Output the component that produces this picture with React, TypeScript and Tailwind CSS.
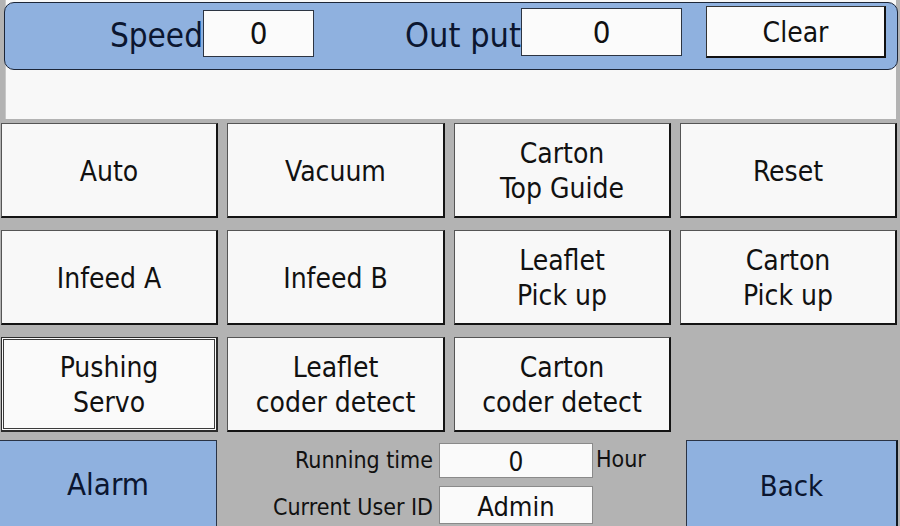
import React from "react";

const face = { fontFamily: '"DejaVu Sans", Verdana, sans-serif' };

function Key({ label, pressed = false }: { label: string[]; pressed?: boolean }) {
  const lines = label.map((l, i) => <span key={i} className="block">{l}</span>);
  if (pressed) {
    return (
      <div className="border border-[#2b2b2b] border-r-2 border-b-2 bg-[#fafafa] p-[1px]">
        <div className="h-full pt-[1px] border border-[#3a3a3a] flex flex-col items-center justify-center text-[28px] leading-[35px] text-[#111] font-stretch-condensed">
          {lines}
        </div>
      </div>
    );
  }
  return (
    <div className="pt-[2px] border-t border-l border-[#555] border-r-2 border-b-2 border-r-[#141414] border-b-[#141414] bg-[#f8f8f8] flex flex-col items-center justify-center text-[28px] leading-[35px] text-[#111] font-stretch-condensed">
      {lines}
    </div>
  );
}

export default function App() {
  return (
    <div className="w-[900px] h-[526px] bg-[#b3b3b3] overflow-hidden flex flex-col" style={face}>
      {/* status header over the message strip */}
      <div className="ml-[5px] mr-[4px] h-[119px] bg-[#f8f8f8] border-l border-[#c8c8c8]">
        <div className="-ml-[2px] -mr-[2px] mt-[2px] h-[68px] rounded-[10px] border-[1.5px] border-[#1c2638] bg-[#8fb1df] flex items-start text-[#0b1630] font-stretch-condensed">
          <div className="w-[198px] text-right text-[33px] leading-none mt-[16px]">Speed</div>
          <div className="w-[111px] h-[47px] mt-[7px] bg-[#fbfbfb] border border-[#2c3442] flex items-center justify-center text-[31px] text-[#111]">0</div>
          <div className="w-[207px] text-right text-[34px] leading-none mt-[15px]">Out put</div>
          <div className="w-[161px] h-[48px] mt-[5px] bg-[#fbfbfb] border border-[#2c3442] flex items-center justify-center text-[31px] text-[#111]">0</div>
          <div className="ml-[24px] w-[180px] h-[52px] mt-[3px] pt-[3px] bg-[#fbfbfb] border-t border-l border-[#333] border-r-2 border-b-2 border-r-[#111] border-b-[#111] flex items-center justify-center text-[28px] text-[#111]">Clear</div>
        </div>
      </div>

      {/* function keys */}
      <div className="mt-[4px] ml-[1px] grid grid-cols-[217px_218px_217px_217px] grid-rows-[95px_95px_95px] gap-x-[9px] gap-y-[12px]">
        <Key label={["Auto"]} />
        <Key label={["Vacuum"]} />
        <Key label={["Carton", "Top Guide"]} />
        <Key label={["Reset"]} />
        <Key label={["Infeed A"]} />
        <Key label={["Infeed B"]} />
        <Key label={["Leaflet", "Pick up"]} />
        <Key label={["Carton", "Pick up"]} />
        <Key label={["Pushing", "Servo"]} pressed />
        <Key label={["Leaflet", "coder detect"]} />
        <Key label={["Carton", "coder detect"]} />
      </div>

      {/* bottom bar */}
      <div className="mt-[8px] flex h-[86px]">
        <div className="w-[217px] bg-[#8fb1df] border-t border-r border-[#2a3344] flex items-center justify-center text-[31px] text-[#0b1630] font-stretch-condensed pt-[2px]">
          Alarm
        </div>
        <div className="w-[469px] grid grid-cols-[218px_158px_auto] grid-rows-[35px_38px] gap-y-[8px] pt-[3px] text-[#111] font-stretch-condensed">
          <div className="text-right text-[23px] leading-[35px] pr-[2px]">Running time</div>
          <div className="ml-[4px] pt-[3px] bg-[#fafafa] border border-[#8a8a8a] flex items-center justify-center text-[26px]">0</div>
          <div className="pl-[3px] text-[23px] leading-[33px]">Hour</div>
          <div className="text-right text-[23px] leading-[42px] pr-[2px]">Current User ID</div>
          <div className="ml-[4px] pt-[4px] bg-[#fafafa] border border-[#8a8a8a] flex items-center justify-center text-[27px]">Admin</div>
          <div />
        </div>
        <div className="w-[212px] bg-[#8fb1df] border-t border-l border-[#2a3344] border-r-2 border-r-[#101820] flex items-center justify-center text-[29px] text-[#0b1630] font-stretch-condensed pt-[6px]">
          Back
        </div>
      </div>
    </div>
  );
}
